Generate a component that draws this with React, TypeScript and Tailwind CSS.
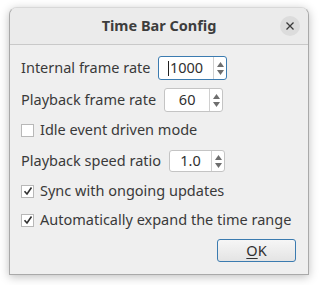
import React from 'react';

const font = { fontFamily: "'Noto Sans', 'DejaVu Sans', sans-serif" };

const SpinArrows: React.FC = () => (
  <div className="flex h-full w-[13px] flex-col items-center justify-center gap-[3px] border-l border-[#d0d0d0]">
    <svg width="7" height="5" viewBox="0 0 7 5">
      <path d="M0 5 L3.5 0 L7 5 Z" fill="#6e6e6e" />
    </svg>
    <svg width="7" height="5" viewBox="0 0 7 5">
      <path d="M0 0 L3.5 5 L7 0 Z" fill="#6e6e6e" />
    </svg>
  </div>
);

const SpinBox: React.FC<{ value: string; width: string; focused?: boolean; height: string }> = ({
  value,
  width,
  focused,
  height,
}) => (
  <div
    className={`flex items-stretch rounded-[3px] bg-white ${width} ${height} ${
      focused ? 'border border-[#3b7bb0]' : 'border border-[#c4c4c4]'
    }`}
  >
    <div className="relative flex flex-1 items-center justify-center text-[14.5px] text-[#303030]">
      {focused && <span className="absolute left-[9px] top-[4px] h-[15px] w-px bg-[#202020]" />}
      {value}
    </div>
    <SpinArrows />
  </div>
);

const Check: React.FC<{ checked?: boolean }> = ({ checked }) => (
  <div className="flex h-[13px] w-[13px] items-center justify-center border border-[#b8b8b8] bg-white">
    {checked && (
      <svg width="10" height="10" viewBox="0 0 10 10">
        <path d="M1.5 5.2 L4 8 L8.5 1.5" fill="none" stroke="#303030" strokeWidth="1.6" />
      </svg>
    )}
  </div>
);

export default function App() {
  return (
    <div className="h-[285px] w-[319px] bg-white pl-[9px] pt-[7px]" style={font}>
      <div className="flex h-[268px] w-[300px] flex-col overflow-hidden rounded-t-[8px] border border-[#a9a9a9] border-t-[#d8d8d8] bg-[#efefef] shadow-[0_2px_10px_rgba(0,0,0,0.25)]">
        <div className="relative flex h-[37px] shrink-0 items-center justify-center border-b border-[#c9c9c9] bg-[#ebebeb]">
          <span className="text-[14.5px] font-bold text-[#3d3d3d]">Time Bar Config</span>
          <div className="absolute right-[8px] top-[8px] flex h-[20px] w-[20px] items-center justify-center rounded-full bg-[#dcdcdc]">
            <svg width="8" height="8" viewBox="0 0 8 8">
              <path d="M0.5 0.5 L7.5 7.5 M7.5 0.5 L0.5 7.5" stroke="#3a3a3a" strokeWidth="1.3" />
            </svg>
          </div>
        </div>
        <div className="flex flex-col pl-[11px] pr-[11px] pt-[11px] text-[14.5px] text-[#3a3a3a]">
          <div className="flex h-[24px] items-center gap-[8px]">
            <span>Internal frame rate</span>
            <SpinBox value="1000" width="w-[69px]" height="h-[24px]" focused />
          </div>
          <div className="mt-[8px] flex h-[24px] items-center gap-[8px]">
            <span>Playback frame rate</span>
            <SpinBox value="60" width="w-[59px]" height="h-[24px]" />
          </div>
          <div className="mt-[8px] flex h-[20px] items-center gap-[6px]">
            <Check />
            <span>Idle event driven mode</span>
          </div>
          <div className="mt-[10px] flex h-[22px] items-center gap-[8px]">
            <span>Playback speed ratio</span>
            <SpinBox value="1.0" width="w-[56px]" height="h-[22px]" />
          </div>
          <div className="mt-[9px] flex h-[20px] items-center gap-[6px]">
            <Check checked />
            <span>Sync with ongoing updates</span>
          </div>
          <div className="mt-[9px] flex h-[20px] items-center gap-[6px]">
            <Check checked />
            <span>Automatically expand the time range</span>
          </div>
          <div className="mt-[9px] flex justify-end pr-[1px]">
            <button className="flex h-[23px] w-[79px] items-center justify-center rounded-[3px] border border-[#3b7bb0] bg-gradient-to-b from-[#f6f6f6] to-[#e4e4e4] text-[14.5px] text-[#303030]">
              <span className="underline underline-offset-2">O</span>K
            </button>
          </div>
        </div>
      </div>
    </div>
  );
}
